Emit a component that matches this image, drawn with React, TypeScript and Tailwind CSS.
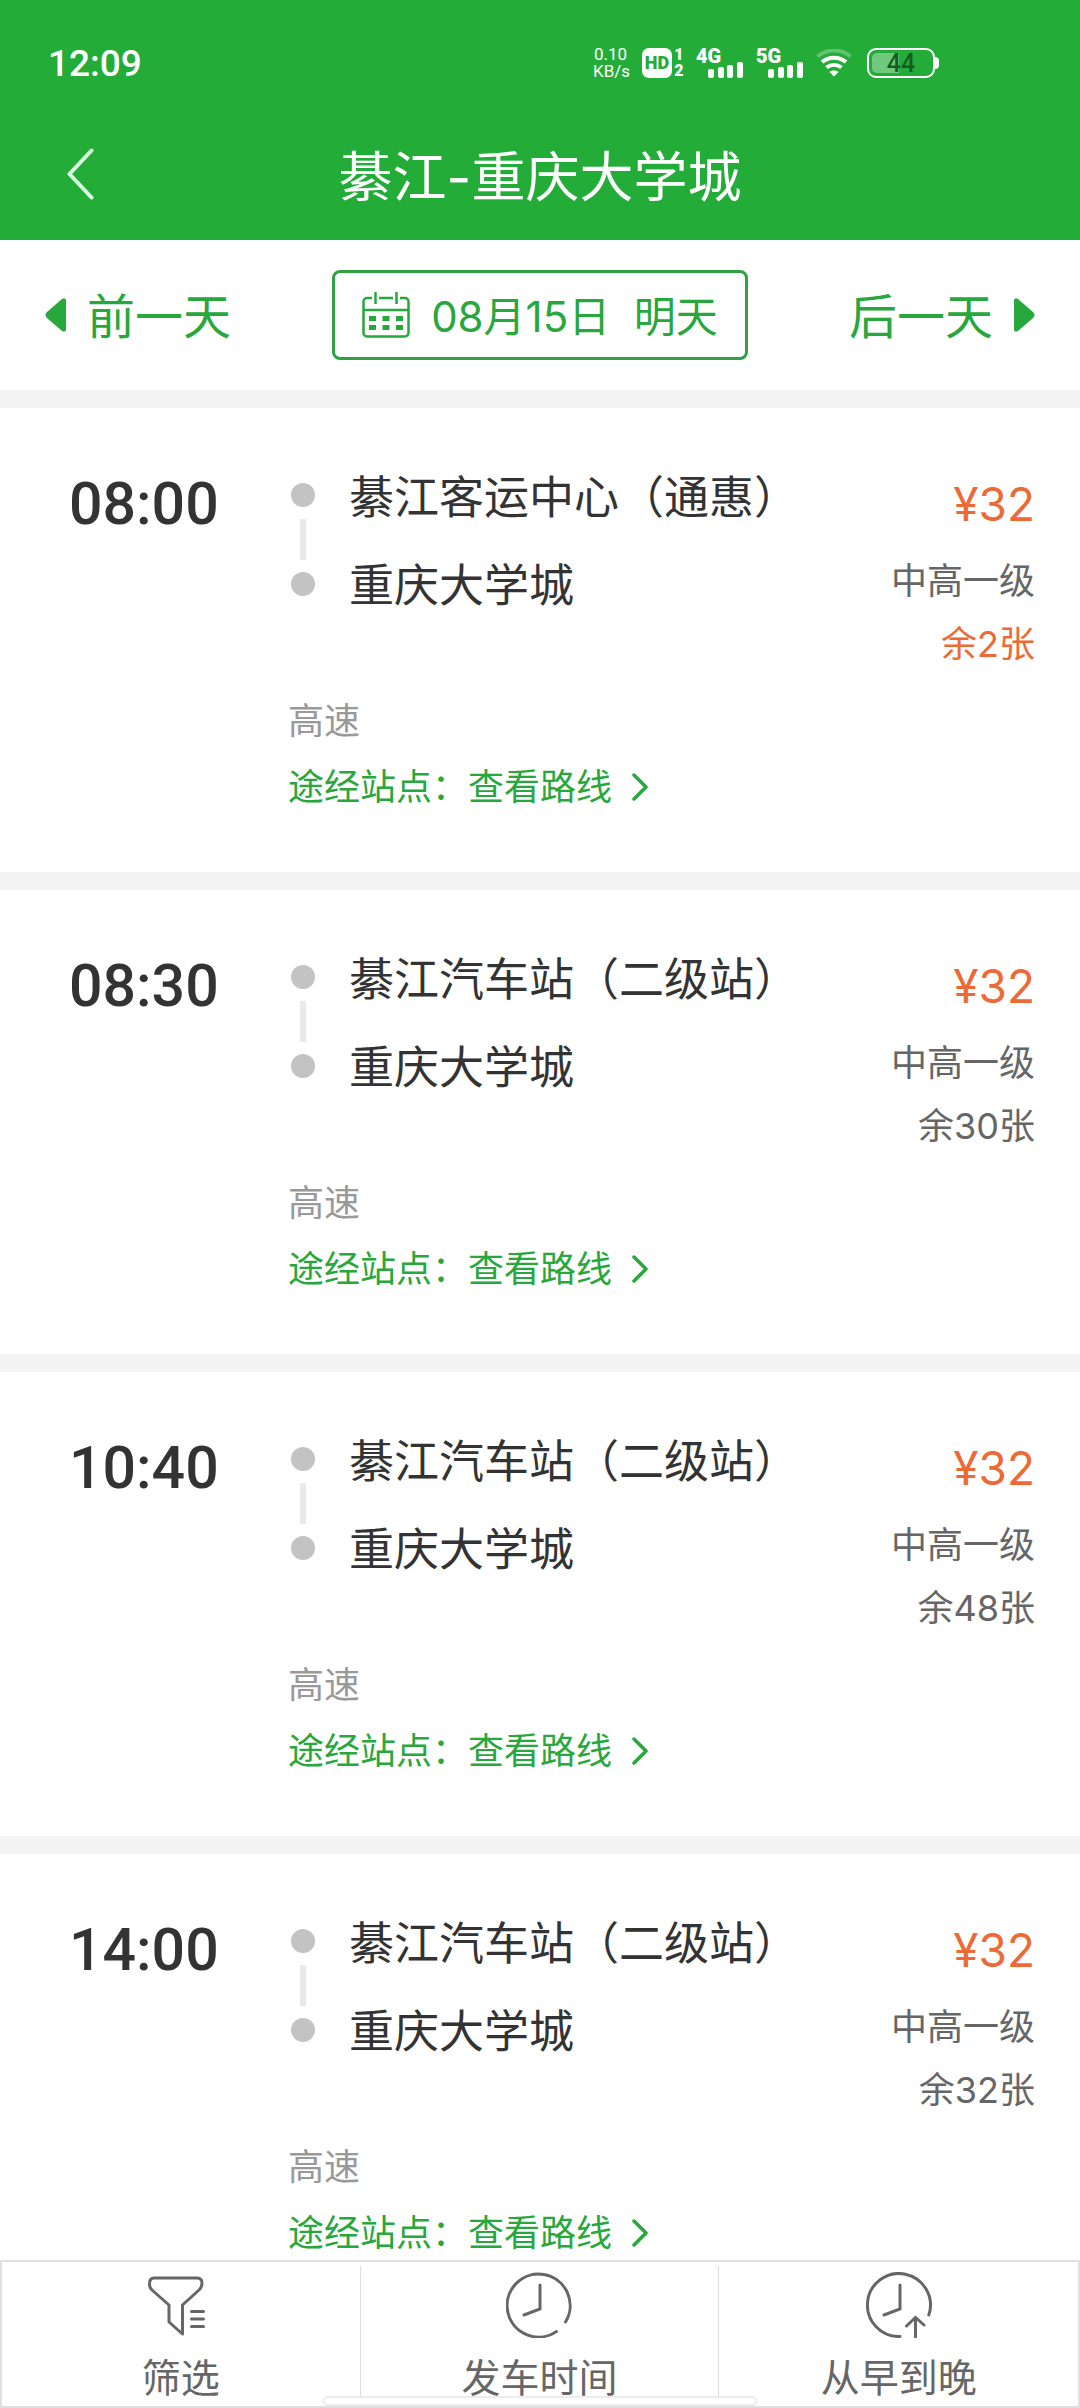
type Trip = {
  time: string;
  from: string;
  to: string;
  price: string;
  level: string;
  left: string;
  low?: boolean;
};

const trips: Trip[] = [
  { time: "08:00", from: "綦江客运中心（通惠）", to: "重庆大学城", price: "¥32", level: "中高一级", left: "余2张", low: true },
  { time: "08:30", from: "綦江汽车站（二级站）", to: "重庆大学城", price: "¥32", level: "中高一级", left: "余30张" },
  { time: "10:40", from: "綦江汽车站（二级站）", to: "重庆大学城", price: "¥32", level: "中高一级", left: "余48张" },
  { time: "14:00", from: "綦江汽车站（二级站）", to: "重庆大学城", price: "¥32", level: "中高一级", left: "余32张" },
];

function Signal({ label }: { label: string }) {
  return (
    <div className="flex h-[30px] items-end">
      <span className="-mr-3 w-6 self-start text-[20px] leading-[16px] font-black">{label}</span>
      <svg width="35" height="16" viewBox="0 0 35 16" fill="currentColor" aria-hidden="true">
        <rect x="0" y="7" width="6" height="9" rx="2" />
        <rect x="10" y="5" width="6" height="11" rx="2" />
        <rect x="19" y="3" width="6" height="13" rx="2" />
        <rect x="29" y="0" width="6" height="16" rx="2" />
      </svg>
    </div>
  );
}

function Wifi() {
  return (
    <svg width="36" height="28" viewBox="0 0 36 28" fill="none" stroke="currentColor" strokeWidth="4" aria-hidden="true">
      <path d="M1.5 7.5C11 -0.5 25 -0.5 34.5 7.5" opacity="0.28" />
      <path d="M6 13C13 7.3 23 7.3 30 13" />
      <path d="M10.5 18.5C15 15 21 15 25.500 18.500" />
      <path d="M18 27.500L13.500 23C16 21 20 21 22.500 23Z" fill="currentColor" stroke="none" />
    </svg>
  );
}

function StatusBar() {
  return (
    <div className="flex h-[126px] items-center justify-between pr-[141px] pl-12 font-['Roboto','Noto_Sans_CJK_SC',sans-serif]">
      <span className="text-[37px] leading-none font-medium">12:09</span>
      <div className="flex items-center">
        <div className="w-[35px] text-center text-[17px] leading-[17px]">
          <div>0.10</div>
          <div>KB/s</div>
        </div>
        <div className="ml-3.5 flex size-[30px] items-center justify-center rounded-[7px] bg-white text-[18px] leading-none font-black text-[#24ac38]">
          HD
        </div>
        <div className="mr-3 ml-0.5 w-[10px] text-center text-[16px] leading-[16px] font-black">
          <div>1</div>
          <div>2</div>
        </div>
        <Signal label="4G" />
        <div className="ml-[13px]">
          <Signal label="5G" />
        </div>
        <div className="ml-[13px]">
          <Wifi />
        </div>
        <div className="ml-[15px] flex items-center">
          <div className="relative flex h-[30px] w-[68px] items-center justify-center rounded-[9px] border-2 border-white">
            <div className="absolute inset-y-[3px] left-[3px] w-[27px] rounded-l-[5px] bg-white/35" />
            <span className="relative text-[25px] leading-none font-medium text-[#145c20]">44</span>
          </div>
          <div className="h-3 w-1 rounded-r-full bg-white" />
        </div>
      </div>
    </div>
  );
}

function CalendarIcon() {
  return (
    <svg width="48" height="46" viewBox="0 0 48 46" fill="none" stroke="currentColor" strokeWidth="2.500" aria-hidden="true">
      <path d="M10 6H5a3.500 3.500 0 0 0-3.500 3.500V41A3.500 3.500 0 0 0 5 44.500H43A3.500 3.500 0 0 0 46.500 41V9.500A3.500 3.500 0 0 0 43 6H38M17 6H31M1.500 18H46.500M13.500 0V12M34.500 0V12" />
      <g strokeWidth="5">
        <path d="M7 26.500h7M20.500 26.500h7M34 26.500h7M7 35.500h7M20.500 35.500h7M34 35.500h7" />
      </g>
    </svg>
  );
}

function DateNav() {
  return (
    <nav className="grid h-[150px] shrink-0 grid-cols-[1fr_auto_1fr] items-center px-[45px] text-[#28a73c]">
      <button className="flex items-center gap-[21px] text-[48px] leading-[72px]">
        <svg width="21" height="34" viewBox="0 0 21 34" fill="currentColor" aria-hidden="true">
          <path d="M21 2V32Q20 35 17 33L2 20Q-1 17 2 14L17 1Q20-1 21 2Z" />
        </svg>
        <span className="pt-1">前一天</span>
      </button>
      <button className="flex h-[90px] items-center gap-[21px] rounded-lg border-3 border-[#30a243] px-[27px] text-[42px] leading-none whitespace-pre">
        <CalendarIcon />
        <span className="pt-1">{"08月15日  明天"}</span>
      </button>
      <button className="flex items-center gap-[21px] justify-self-end text-[48px] leading-[72px]">
        <span className="pt-1">后一天</span>
        <svg width="21" height="34" viewBox="0 0 21 34" fill="currentColor" aria-hidden="true">
          <path d="M0 2V32Q1 35 4 33L19 20Q22 17 19 14L4 1Q1-1 0 2Z" />
        </svg>
      </button>
    </nav>
  );
}

function TripCard({ trip }: { trip: Trip }) {
  return (
    <li className="flex h-[482px] shrink-0 border-t-[18px] border-[#f4f4f4] bg-white pr-[45px] pt-[60px]">
      <time className="w-[288px] shrink-0 pt-1 pl-[69px] font-['Roboto',sans-serif] text-[59px] leading-[64px] font-medium text-[#333]">{trip.time}</time>
      <div className="min-w-0 flex-1">
        <div className="flex gap-[34px]">
          <div className="flex flex-col items-center gap-3 pt-[15px] pl-[3px]">
            <span className="size-6 rounded-full bg-[#c3c3c3]" />
            <span className="h-[41px] w-1.5 bg-[#e9e9e9]" />
            <span className="size-6 rounded-full bg-[#c3c3c3]" />
          </div>
          <div className="-mt-3.5 text-[45px] leading-[88px] text-[#333]">
            <div>{trip.from}</div>
            <div>{trip.to}</div>
          </div>
        </div>
        <div className="mt-[58px] text-[36px] leading-[66px] text-[#999]">高速</div>
        <a href="#route" className="flex items-center text-[36px] leading-[66px] text-[#28a73c]">
          途经站点：查看路线
          <svg className="ml-5" width="16" height="28" viewBox="0 0 16 28" fill="none" stroke="currentColor" strokeWidth="3.500" strokeLinecap="round" strokeLinejoin="round" aria-hidden="true">
            <path d="M2 2L14 14L2 26" />
          </svg>
        </a>
      </div>
      <div className="text-right text-[36px] leading-[63px] text-[#666]">
        <div className="pt-1 text-[46px] leading-[64px] text-[#ed6a36]">{trip.price}</div>
        <div className="mt-3.5">{trip.level}</div>
        <div className={trip.low ? "text-[#ed6a36]" : ""}>{trip.left}</div>
      </div>
    </li>
  );
}

function FilterIcon() {
  return (
    <svg width="66" height="66" viewBox="0 0 66 66" fill="none" stroke="currentColor" strokeWidth="3" strokeLinecap="round" strokeLinejoin="round" aria-hidden="true">
      <path d="M6 6H49Q54 6 54 11Q54 15 51 18L34.500 33V62L21 50V33L4 18Q1 15 1.500 11Q2 6 6 6Z" />
      <path d="M43.500 39.500h12M43.500 47h12M43.500 54.500h12" />
    </svg>
  );
}

function ClockIcon() {
  return (
    <svg width="66" height="66" viewBox="0 0 66 66" fill="none" stroke="currentColor" strokeWidth="3" strokeLinecap="round" aria-hidden="true">
      <path d="M59.500 50A31.500 31.500 0 1 0 50.500 59.500" />
      <path d="M34 13V37L18 43" />
    </svg>
  );
}

function ClockUpIcon() {
  return (
    <svg width="66" height="66" viewBox="0 0 66 66" fill="none" stroke="currentColor" strokeWidth="3" strokeLinecap="round" aria-hidden="true">
      <path d="M62.800 43A31.500 31.500 0 1 0 34 64.500" />
      <path d="M34 13V37L18 43M49.500 65V46M40.500 54L49.500 45.500L58 53" />
    </svg>
  );
}

function BottomBar() {
  const items = [
    { label: "筛选", icon: <FilterIcon /> },
    { label: "发车时间", icon: <ClockIcon /> },
    { label: "从早到晚", icon: <ClockUpIcon /> },
  ];
  return (
    <footer className="relative h-[148px] shrink-0 border-2 border-[#e0e0e0] bg-white pt-1 text-[#666]">
      <div className="grid h-[135px] grid-cols-3 divide-x divide-[#dcdcdc]">
        {items.map((item) => (
          <button key={item.label} className="flex flex-col items-center pt-1.5 text-[39px] leading-[60px]">
            {item.icon}
            <span className="mt-2.5">{item.label}</span>
          </button>
        ))}
      </div>
      <div className="absolute bottom-0 left-1/2 h-[10px] w-[435px] -translate-x-1/2 rounded-full border-2 border-[#ececec] bg-white" />
    </footer>
  );
}

export default function App() {
  return (
    <div className="flex h-screen flex-col bg-white font-['Inter','Noto_Sans_CJK_SC',sans-serif]">
      <header className="shrink-0 bg-[#24ac38] pb-[18px] text-white">
        <StatusBar />
        <div className="grid h-24 grid-cols-[1fr_auto_1fr] items-center px-[67px]">
          <button aria-label="返回" className="justify-self-start">
            <svg width="27" height="52" viewBox="0 0 27 52" fill="none" stroke="#d9fbe0" strokeWidth="4" strokeLinecap="round" strokeLinejoin="round" aria-hidden="true">
              <path d="M24.500 2.500L2.500 26L24.500 49.500" />
            </svg>
          </button>
          <h1 className="pt-2 text-[54px] leading-none">綦江-重庆大学城</h1>
        </div>
      </header>
      <DateNav />
      <ul className="flex min-h-0 flex-1 flex-col overflow-y-auto [scrollbar-width:none]">
        {trips.map((trip) => (
          <TripCard key={trip.time} trip={trip} />
        ))}
      </ul>
      <BottomBar />
    </div>
  );
}
